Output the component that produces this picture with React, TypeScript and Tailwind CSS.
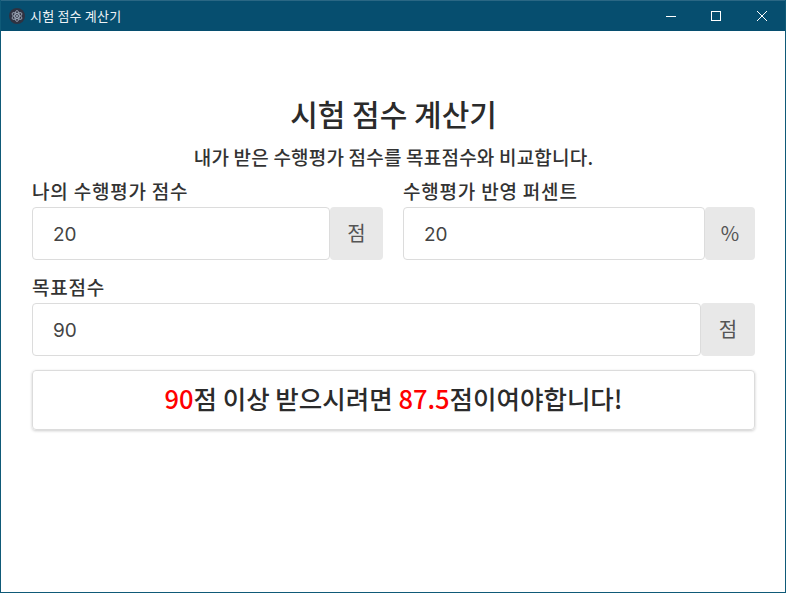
const font = "font-['Noto_Sans_CJK_KR','Noto_Sans',sans-serif]";

const AppIcon = () => (
  <svg width="16" height="16" viewBox="0 0 16 16" fill="none">
    <circle cx="8" cy="8" r="8" fill="#2f3241" />
    <g stroke="#a9b4c4" strokeWidth="0.8" fill="none">
      <ellipse cx="8" cy="8" rx="5.5" ry="2.2" transform="rotate(30 8 8)" />
      <ellipse cx="8" cy="8" rx="5.5" ry="2.2" transform="rotate(90 8 8)" />
      <ellipse cx="8" cy="8" rx="5.5" ry="2.2" transform="rotate(150 8 8)" />
    </g>
    <circle cx="8" cy="8" r="1" fill="#a9b4c4" />
  </svg>
);

const Field = ({ label, value, unit, unitWidth, className }: { label?: string; value: string; unit: string; unitWidth: string; className?: string }) => (
  <div className={className}>
    {label && <div className="text-[19px] leading-[26px] mb-[3px] tracking-[0.8px] font-medium text-[#333]">{label}</div>}
    <div className="flex h-[53px]">
      <div className="flex-1 flex items-center pl-[20px] pt-[3px] bg-white border border-[#dcdcdc] rounded-[4px] text-[19px] text-[#444] font-['Inter',sans-serif]">{value}</div>
      <div className={`${unitWidth} flex items-center justify-center pb-[2px] bg-[#e8e8e8] rounded-[4px] text-[20px] text-[#555]`}>{unit}</div>
    </div>
  </div>
);

export default function App() {
  return (
    <div className={`w-[786px] h-[593px] flex flex-col bg-white border-x border-b border-[#0f5a78] overflow-hidden ${font}`}>
      <div className="h-[31px] -mx-px shrink-0 flex items-center bg-[#064e6f] border-t border-[#2a6784] text-white">
        <div className="ml-[9px] mr-[5px]"><AppIcon /></div>
        <span className="text-[13px] tracking-[0.2px] text-[#eef3f6]">시험 점수 계산기</span>
        <div className="ml-auto mr-px flex items-center h-full">
          <div className="w-[44px] flex justify-center">
            <svg width="10" height="10" viewBox="0 0 10 10"><path d="M0 5.5h10" stroke="#fff" /></svg>
          </div>
          <div className="w-[46px] flex justify-center">
            <svg width="10" height="10" viewBox="0 0 10 10"><rect x="0.5" y="0.5" width="9" height="9" fill="none" stroke="#fff" /></svg>
          </div>
          <div className="w-[46px] flex justify-center">
            <svg width="10" height="10" viewBox="0 0 10 10"><path d="M0 0l10 10M10 0L0 10" stroke="#fff" /></svg>
          </div>
        </div>
      </div>
      <div className="pl-[31px] pr-[30px] flex-1 pt-[60px]">
        <h1 className="text-center text-[30px] leading-[44px] font-medium text-[#2b2b2b]">시험 점수 계산기</h1>
        <p className="text-center text-[19px] leading-[26px] mt-[9px] tracking-[0.2px] font-medium text-[#333]">내가 받은 수행평가 점수를 목표점수와 비교합니다.</p>
        <div className="flex gap-[20px] mt-[8px]">
          <Field className="w-[351px]" label="나의 수행평가 점수" value="20" unit="점" unitWidth="w-[53px]" />
          <Field className="w-[352px]" label="수행평가 반영 퍼센트" value="20" unit="%" unitWidth="w-[50px]" />
        </div>
        <Field className="mt-[14px]" label="목표점수" value="90" unit="점" unitWidth="w-[54px]" />
        <div className="mt-[14px] h-[60px] flex items-center justify-center pb-[3px] border border-[#dcdcdc] rounded-[4px] shadow-[0_1px_3px_rgba(0,0,0,0.2)] text-[25.5px] font-medium text-[#2b2b2b]">
          <span><span className="text-[#ff0000]">90</span>점 이상 받으시려면 <span className="text-[#ff0000]">87.5</span>점이여야합니다!</span>
        </div>
      </div>
    </div>
  );
}
